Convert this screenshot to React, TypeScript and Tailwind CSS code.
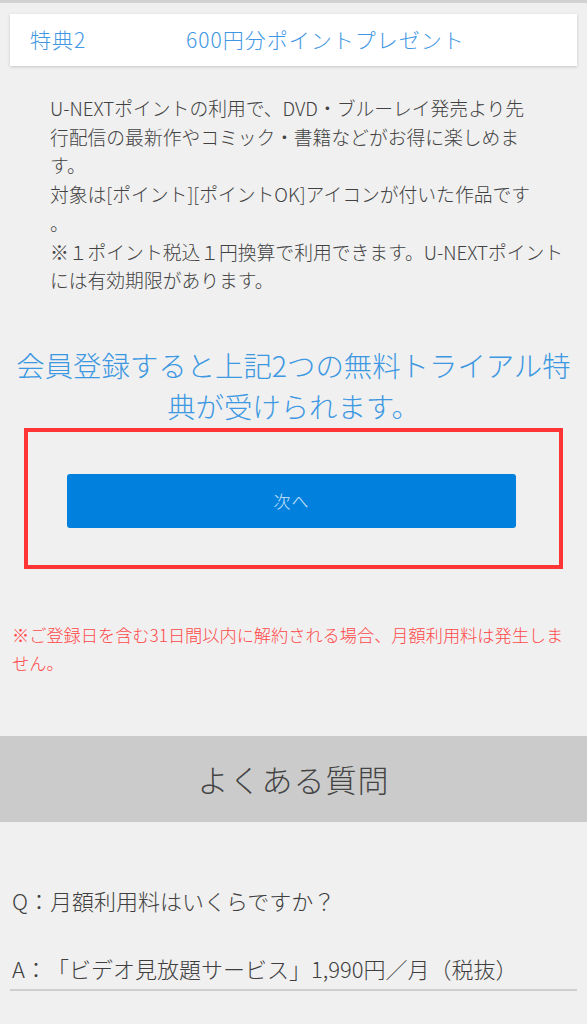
import React from 'react';

const font = { fontFamily: '"Noto Sans CJK JP", "Noto Sans", sans-serif' };

const pointLines = [
  'U-NEXTポイントの利用で、DVD・ブルーレイ発売より先',
  '行配信の最新作やコミック・書籍などがお得に楽しめま',
  'す。',
  '対象は[ポイント][ポイントOK]アイコンが付いた作品です',
  '。',
  '※１ポイント税込１円換算で利用できます。U-NEXTポイント',
  'には有効期限があります。',
];

export default function App() {
  return (
    <div
      className="min-h-screen bg-[#f0f0f0] border-t-[3px] border-[#d2d2d2] pb-10 font-light [text-spacing-trim:space-all]"
      style={font}
    >
      {/* Benefit card */}
      <div className="mx-[10px] mt-[11px] h-[52px] bg-white shadow-[0_1px_3px_rgba(0,0,0,0.18)] flex items-center pl-[20px] text-[21px] tracking-[1px] text-[#3f97e3]">
        <span className="w-[156px] shrink-0">特典2</span>
        <span>600円分ポイントプレゼント</span>
      </div>

      {/* Description */}
      <div className="mt-[28px] pl-[50px] text-[18.8px] leading-[28.7px] text-[#424242]">
        {pointLines.map((line, i) => (
          <p key={i} className="whitespace-nowrap">{line}</p>
        ))}
      </div>

      {/* Trial notice */}
      <h2 className="mt-[49px] text-center text-[28.4px] leading-[41px] text-[#3d98e2] font-light">
        会員登録すると上記2つの無料トライアル特
        <br />
        典が受けられます。
      </h2>

      <div className="mx-[24px] mt-[2px] border-[4px] border-[#ff3535] pt-[42px] pb-[37px] pl-[39px] pr-[43px]">
        <button className="w-full h-[54px] bg-[#0280de] rounded-[3px] text-[17px] text-[#cfe5f7] tracking-[1px]">
          次へ
        </button>
      </div>

      <p className="mt-[52px] px-[12px] text-[17.2px] leading-[28px] text-[#ff4848] whitespace-nowrap">
        ※ご登録日を含む31日間以内に解約される場合、月額利用料は発生しま
        <br />
        せん。
      </p>

      {/* FAQ */}
      <div className="mt-[59px] h-[86px] bg-[#cbcbcb] flex items-center justify-center">
        <h2 className="text-[31px] tracking-[1px] text-[#444] font-light">よくある質問</h2>
      </div>

      <div className="px-[10px] text-[22px] text-[#3f3f3f]">
        <p className="mt-[63px] pl-[2px] leading-[30px]">Q：月額利用料はいくらですか？</p>
        <p className="mt-[38px] pl-[2px] pb-[6px] leading-[30px] border-b-[2px] border-[#cfcfcf]">
          A：「ビデオ見放題サービス」1,990円／月（税抜）
        </p>
      </div>
    </div>
  );
}
